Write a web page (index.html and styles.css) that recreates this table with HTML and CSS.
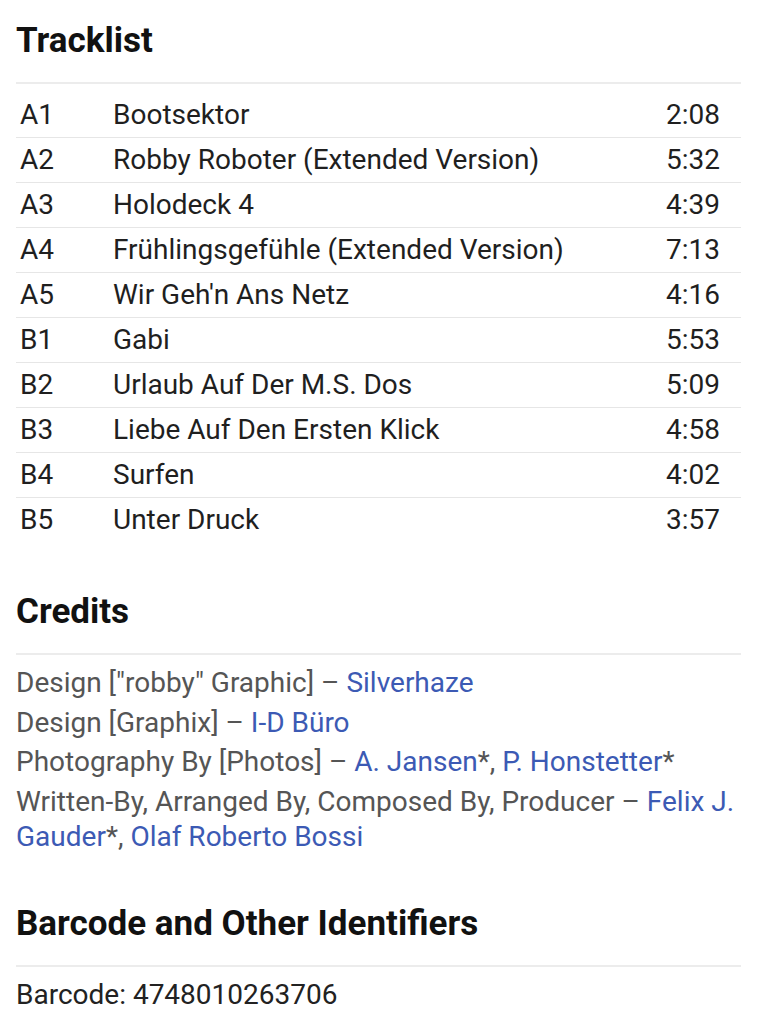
FILE: index.html
```html
<!DOCTYPE html>
<html>
<head>
<meta charset="utf-8">
<link rel="stylesheet" href="styles.css">
</head>
<body>
<main class="page">
  <section class="section">
    <h2 class="heading">Tracklist</h2>
    <table class="tracks">
      <tr><td class="pos">A1</td><td class="title">Bootsektor</td><td class="dur">2:08</td></tr>
      <tr><td class="pos">A2</td><td class="title">Robby Roboter (Extended Version)</td><td class="dur">5:32</td></tr>
      <tr><td class="pos">A3</td><td class="title">Holodeck 4</td><td class="dur">4:39</td></tr>
      <tr><td class="pos">A4</td><td class="title">Frühlingsgefühle (Extended Version)</td><td class="dur">7:13</td></tr>
      <tr><td class="pos">A5</td><td class="title">Wir Geh'n Ans Netz</td><td class="dur">4:16</td></tr>
      <tr><td class="pos">B1</td><td class="title">Gabi</td><td class="dur">5:53</td></tr>
      <tr><td class="pos">B2</td><td class="title">Urlaub Auf Der M.S. Dos</td><td class="dur">5:09</td></tr>
      <tr><td class="pos">B3</td><td class="title">Liebe Auf Den Ersten Klick</td><td class="dur">4:58</td></tr>
      <tr><td class="pos">B4</td><td class="title">Surfen</td><td class="dur">4:02</td></tr>
      <tr><td class="pos">B5</td><td class="title">Unter Druck</td><td class="dur">3:57</td></tr>
    </table>
  </section>
  <section class="section">
    <h2 class="heading">Credits</h2>
    <ul class="credits">
      <li>Design ["robby" Graphic] – <a href="#">Silverhaze</a></li>
      <li>Design [Graphix] – <a href="#">I-D Büro</a></li>
      <li>Photography By [Photos] – <a href="#">A. Jansen</a>*, <a href="#">P. Honstetter</a>*</li>
      <li>Written-By, Arranged By, Composed By, Producer – <a href="#">Felix J. Gauder</a>*, <a href="#">Olaf Roberto Bossi</a></li>
    </ul>
  </section>
  <section class="section">
    <h2 class="heading">Barcode and Other Identifiers</h2>
    <ul class="ids">
      <li>Barcode: 4748010263706</li>
    </ul>
  </section>
</main>
</body>
</html>
```

FILE: styles.css
```css
html, body {
  margin: 0;
  padding: 0;
  background: #ffffff;
}
body {
  font-family: Roboto, "Liberation Sans", sans-serif;
  color: #1f1f1f;
}
.page {
  padding: 0 16px;
}
.heading {
  font-size: 35px;
  font-weight: 700;
  color: #111;
  margin: 0;
  padding: 20px 0 20px;
  line-height: 42px;
  border-bottom: 2px solid #ececec;
}
.tracks {
  width: 100%;
  border-collapse: collapse;
  margin-top: 9px;
  font-size: 28px;
  margin-bottom: 29px;
}
.tracks tr {
  border-bottom: 1.5px solid #e6e6e6;
}
.tracks tr:last-child {
  border-bottom: none;
}
.tracks td {
  height: 44px;
  padding: 0;
  vertical-align: middle;
  line-height: 34px;
}
.pos {
  width: 93px;
  padding-left: 4px !important;
}
.dur {
  text-align: right;
  padding-right: 21px !important;
}
.credits, .ids {
  list-style: none;
  margin: 0;
  padding: 0;
  font-size: 28px;
  line-height: 35px;
  color: #555;
}
.credits {
  padding-top: 10px;
  margin-bottom: 29px;
}
.credits li {
  margin-bottom: 4.5px;
}
.credits a {
  color: #3c5ab4;
  text-decoration: none;
}
.ids {
  padding-top: 10px;
  color: #222;
}
```
